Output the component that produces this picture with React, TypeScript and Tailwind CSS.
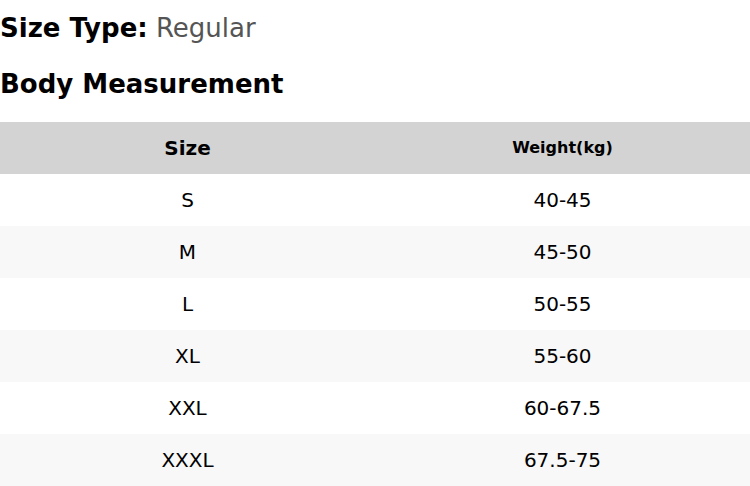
const rows = [
  { size: "S", weight: "40-45" },
  { size: "M", weight: "45-50" },
  { size: "L", weight: "50-55" },
  { size: "XL", weight: "55-60" },
  { size: "XXL", weight: "60-67.5" },
  { size: "XXXL", weight: "67.5-75" },
];

export default function App() {
  return (
    <div className="w-[750px] bg-white text-black font-['DejaVu_Sans',sans-serif]">
      <p className="text-[26px] leading-[56px] h-[56px]">
        <span className="font-bold">Size Type:</span>{" "}
        <span className="text-[#555]">Regular</span>
      </p>
      <h2 className="text-[26px] font-bold leading-[56px] h-[66px]">
        Body Measurement
      </h2>
      <table className="w-full border-collapse">
        <thead>
          <tr className="bg-[#d3d3d3] h-[52px]">
            <th className="w-1/2 text-[20px] font-bold">Size</th>
            <th className="w-1/2 text-[16px] font-bold">Weight(kg)</th>
          </tr>
        </thead>
        <tbody>
          {rows.map((row, i) => (
            <tr
              key={row.size}
              className={`h-[52px] text-[20px] ${i % 2 === 1 ? "bg-[#f8f8f8]" : "bg-white"}`}
            >
              <td className="text-center">{row.size}</td>
              <td className="text-center">{row.weight}</td>
            </tr>
          ))}
        </tbody>
      </table>
    </div>
  );
}
